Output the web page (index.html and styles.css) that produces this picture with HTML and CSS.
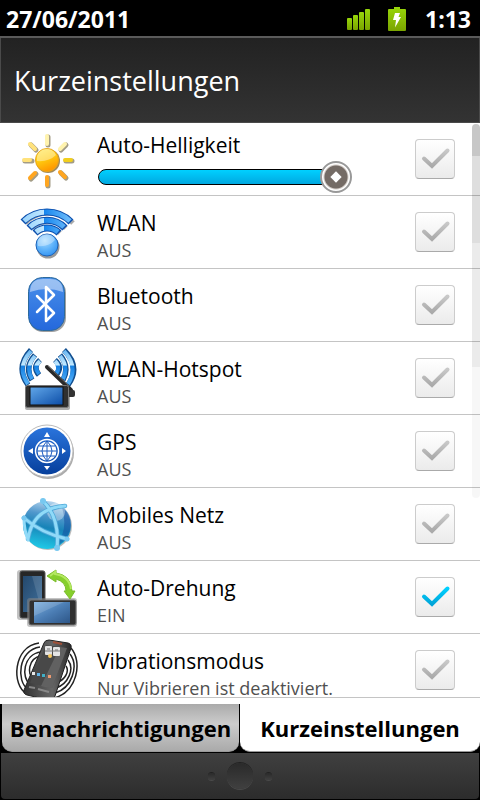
FILE: index.html
```html
<!DOCTYPE html>
<html lang="de">
  <head>
    <meta charset="UTF-8" />
    <meta name="viewport" content="width=device-width, initial-scale=1.0" />
    <title>Kurzeinstellungen</title>
    <link rel="stylesheet" href="styles.css">
  </head>
  <body>
    <!-- shared gradients and the tick -->
    <svg class="defs" width="0" height="0" aria-hidden="true">
      <defs>
        <linearGradient id="tickOff" x1="0" y1="0" x2="0" y2="1">
          <stop offset="0" stop-color="#c8c8c8" />
          <stop offset="1" stop-color="#aaa" />
        </linearGradient>
        <linearGradient id="tickOn" x1="0" y1="0" x2="0" y2="1">
          <stop offset="0" stop-color="#00d0ff" />
          <stop offset="1" stop-color="#00a4d8" />
        </linearGradient>
        <linearGradient id="green" x1="0" y1="0" x2="0" y2="1">
          <stop offset="0" stop-color="#98d60a" />
          <stop offset="1" stop-color="#7aa400" />
        </linearGradient>
        <linearGradient id="sun" x1="0" y1="0" x2="0.4" y2="1">
          <stop offset="0" stop-color="#ffe94a" />
          <stop offset="0.5" stop-color="#ffce10" />
          <stop offset="1" stop-color="#ff9a00" />
        </linearGradient>
        <linearGradient id="wave" x1="0" y1="0" x2="1" y2="0">
          <stop offset="0" stop-color="#9bd4fb" />
          <stop offset="0.43" stop-color="#bfe6ff" />
          <stop offset="0.44" stop-color="#1686ee" />
          <stop offset="1" stop-color="#6dbcfb" />
        </linearGradient>
        <linearGradient id="spot" x1="0" y1="2" x2="0" y2="39" gradientUnits="userSpaceOnUse">
          <stop offset="0" stop-color="#5aaef0" />
          <stop offset="0.45" stop-color="#c2e9ff" />
          <stop offset="0.5" stop-color="#1682e4" />
          <stop offset="1" stop-color="#59b4fa" />
        </linearGradient>
        <radialGradient id="ball" cx="0.4" cy="0.3" r="0.8">
          <stop offset="0" stop-color="#a9dcff" />
          <stop offset="0.5" stop-color="#62b5fb" />
          <stop offset="1" stop-color="#2a8df0" />
        </radialGradient>
        <linearGradient id="blue" x1="0" y1="0" x2="0" y2="1">
          <stop offset="0" stop-color="#4a90ea" />
          <stop offset="1" stop-color="#2468dc" />
        </linearGradient>
        <linearGradient id="navy" x1="0" y1="0" x2="0" y2="1">
          <stop offset="0" stop-color="#2a74dc" />
          <stop offset="1" stop-color="#063f9c" />
        </linearGradient>
        <linearGradient id="screen" x1="0" y1="0" x2="1" y2="1">
          <stop offset="0" stop-color="#62a8ea" />
          <stop offset="1" stop-color="#0b4ca6" />
        </linearGradient>
        <linearGradient id="glass" x1="0" y1="0" x2="1" y2="1">
          <stop offset="0" stop-color="#7aaede" />
          <stop offset="0.5" stop-color="#4b7db4" />
          <stop offset="1" stop-color="#2d5688" />
        </linearGradient>
        <linearGradient id="glassDark" x1="0" y1="0" x2="1" y2="1">
          <stop offset="0" stop-color="#24486c" />
          <stop offset="1" stop-color="#40709c" />
        </linearGradient>
        <linearGradient id="globe" x1="0.6" y1="0" x2="0.4" y2="1">
          <stop offset="0" stop-color="#b8d6ee" />
          <stop offset="0.3" stop-color="#4f97cc" />
          <stop offset="0.55" stop-color="#1784b8" />
          <stop offset="1" stop-color="#20cbe8" />
        </linearGradient>
        <linearGradient id="body" x1="0" y1="0" x2="1" y2="0">
          <stop offset="0" stop-color="#333" />
          <stop offset="0.6" stop-color="#666" />
          <stop offset="1" stop-color="#2a2a2a" />
        </linearGradient>
        <symbol id="tick" viewBox="0 0 40 40">
          <path d="M9 19.500 L17 27 L32.500 11.500" fill="none" stroke-width="4" stroke-linecap="round" />
        </symbol>
      </defs>
    </svg>

    <div class="screen">
      <div class="statusbar">
        <span>27/06/2011</span>
        <svg class="signal" width="28" height="26" viewBox="0 0 28 26" aria-hidden="true">
          <g fill="url(#green)">
            <rect x="2" y="12" width="5" height="12" rx="1" />
            <rect x="8" y="9" width="5" height="15" rx="1" />
            <rect x="14" y="6" width="5" height="18" rx="1" />
            <rect x="20" y="3" width="5" height="21" rx="1" />
          </g>
        </svg>
        <svg class="battery" width="18" height="26" viewBox="0 0 18 26" aria-hidden="true">
          <path d="M1 3 H6 V1 H12 V3 H17 Q18 3 18 4 V24 Q18 25 17 25 H1 Q0 25 0 24 V4 Q0 3 1 3Z" fill="url(#green)" />
          <path d="M7 7 H12 L10.500 11 H13 L7 21.500 L8 14 H5Z" fill="#fff" />
        </svg>
        <span class="clock">1:13</span>
      </div>

      <h1 class="title">Kurzeinstellungen</h1>

      <main class="content">
        <ul class="settings">
          <li class="row">
            <svg class="icon" viewBox="0 0 64 64" aria-hidden="true">
              <g stroke-width="5" stroke-linecap="round">
                <g stroke="#8d8468" opacity=".8">
                  <path d="M33 10V18M33 51V59M10 34H17M51 34H57M16 18L21 23M51 18L46 23M16 52L21 47M51 51L46 46" />
                </g>
                <g stroke-width="4">
                  <path stroke="#fff3ae" d="M32 9V17M50 17L45 22" />
                  <path stroke="#ffe27c" d="M15 17L20 22M9 33H15" />
                  <path stroke="#f2cf1c" d="M50 33H56" />
                  <path stroke="#ffa620" d="M15 51L20 46M32 50V58M50 50L45 45" />
                </g>
              </g>
              <circle cx="33" cy="34" r="12" fill="#a08a5c" />
              <circle cx="32" cy="33" r="11.500" fill="url(#sun)" stroke="#e8a51c" />
              <path d="M22 34 A10 10 0 0 1 41 28 Q34 35 22 34Z" fill="#fff" opacity=".4" />
            </svg>
            <div class="text with-slider">
              <label class="name" for="brightness">Auto-Helligkeit</label>
              <div class="slider">
                <span class="bar"></span>
                <input type="range" min="0" max="100" value="100" aria-label="Helligkeit">
              </div>
            </div>
            <span class="check">
              <input type="checkbox" id="brightness">
              <svg aria-hidden="true"><use href="#tick" /></svg>
            </span>
          </li>

          <li class="row">
            <svg class="icon" viewBox="0 0 64 64" aria-hidden="true">
              <path d="M10 23 A34 34 0 0 1 58 23M17 28 A25 25 0 0 1 51 28M22 33 A17 17 0 0 1 45 33" fill="none" stroke="#555" stroke-width="5" opacity=".5" />
              <circle cx="33" cy="47" r="11.500" fill="#555" opacity=".6" />
              <g fill="none">
                <path stroke="#0c4fae" stroke-width="7" d="M8 22 A34 34 0 0 1 56 22M14 28 A25 25 0 0 1 50 28M20 33 A17 17 0 0 1 44 33" />
                <path stroke="url(#wave)" stroke-width="5" d="M9 21 A34 34 0 0 1 55 21M15 27 A25 25 0 0 1 49 27M21 32 A17 17 0 0 1 43 32" />
              </g>
              <circle cx="32" cy="45" r="11" fill="url(#ball)" stroke="#1c62b8" />
              <path d="M23 46 A9 9 0 0 1 40 40 Q34 47 23 46Z" fill="#fff" opacity=".35" />
            </svg>
            <div class="text">
              <label class="name" for="wlan">WLAN</label>
              <span class="state">AUS</span>
            </div>
            <span class="check">
              <input type="checkbox" id="wlan">
              <svg aria-hidden="true"><use href="#tick" /></svg>
            </span>
          </li>

          <li class="row">
            <svg class="icon" viewBox="0 0 64 64" aria-hidden="true">
              <rect x="14" y="6" width="37" height="53" rx="14" fill="#777" opacity=".7" />
              <rect x="13.500" y="4.500" width="36" height="53" rx="14" fill="url(#blue)" stroke="#2c6a9c" />
              <path d="M15 19 Q15 6 28 6 H35 Q48 6 48 19 Q32 13 15 19Z" fill="#fff" opacity=".45" />
              <path d="M22 23 L39 40 L31 48 V14 L39 22 L22 39" fill="none" stroke="#fff" stroke-width="2.500" stroke-linejoin="round" stroke-linecap="round" />
            </svg>
            <div class="text">
              <label class="name" for="bluetooth">Bluetooth</label>
              <span class="state">AUS</span>
            </div>
            <span class="check">
              <input type="checkbox" id="bluetooth">
              <svg aria-hidden="true"><use href="#tick" /></svg>
            </span>
          </li>

          <li class="row">
            <svg class="icon" viewBox="0 0 64 64" aria-hidden="true">
              <g fill="none">
                <path stroke="#124f90" stroke-width="5.500" d="M16 4 Q0 21 13 39M20 9 Q9 21 17 34M25 14 Q17 21 24 29M49 4 Q66 21 53 39M45 9 Q55 21 48 34M40 14 Q48 21 41 29" />
                <path stroke="url(#spot)" stroke-width="4" d="M16 5 Q1 21 13 38M20 10 Q10 21 17 33M25 15 Q18 21 24 28M49 5 Q64 21 53 38M45 10 Q54 21 48 33M40 15 Q46 21 41 28" />
              </g>
              <rect x="10" y="41" width="45" height="23" rx="2" fill="#777" opacity=".6" />
              <path d="M32 21 L56 44" stroke="#292929" stroke-width="4" stroke-linecap="round" />
              <path d="M33 20 L54 40" stroke="#666" stroke-width="1" />
              <rect x="52" y="44" width="8" height="7" rx="2" fill="#333" />
              <rect x="10.500" y="39.500" width="43" height="22" rx="2" fill="#303030" stroke="#777" />
              <rect x="15" y="41" width="33" height="18" fill="url(#screen)" stroke="#111" />
            </svg>
            <div class="text">
              <label class="name" for="hotspot">WLAN-Hotspot</label>
              <span class="state">AUS</span>
            </div>
            <span class="check">
              <input type="checkbox" id="hotspot">
              <svg aria-hidden="true"><use href="#tick" /></svg>
            </span>
          </li>

          <li class="row">
            <svg class="icon" viewBox="0 0 64 64" aria-hidden="true">
              <circle cx="33" cy="34" r="26" fill="#888" opacity=".7" />
              <circle cx="32" cy="32" r="26" fill="#fff" stroke="#bbb" />
              <circle cx="32" cy="32" r="23.500" fill="url(#navy)" />
              <circle cx="32" cy="32" r="11.500" fill="none" stroke="#fff" stroke-width="1.500" />
              <circle cx="32" cy="32" r="9.500" fill="#fff" />
              <path d="M32 22V42M22 32H42M24 27H40M24 37H40M32 22 Q22 32 32 42 Q42 32 32 22" fill="none" stroke="#1d5cc0" />
              <path d="M32 13L35 18H29ZM32 51L35 47H29ZM13 32L18 29V35ZM51 32L47 29V35Z" fill="#fff" />
            </svg>
            <div class="text">
              <label class="name" for="gps">GPS</label>
              <span class="state">AUS</span>
            </div>
            <span class="check">
              <input type="checkbox" id="gps">
              <svg aria-hidden="true"><use href="#tick" /></svg>
            </span>
          </li>

          <li class="row">
            <svg class="icon" viewBox="0 0 64 64" aria-hidden="true">
              <circle cx="33" cy="34" r="24" fill="#777" opacity=".5" />
              <circle cx="32" cy="33" r="24" fill="url(#globe)" />
              <path d="M47 15 Q58 24 55 38 Q50 52 40 54 Q54 40 47 15Z" fill="#1450a0" opacity=".55" />
              <ellipse cx="41" cy="20" rx="9" ry="9" fill="#fff" opacity=".35" />
              <g fill="none" stroke="#4fa8d8" stroke-width="4.500" stroke-linecap="round">
                <path d="M28 9 Q45 26 42 56M9 26 Q26 41 52 47M13 47 Q18 16 50 14" />
              </g>
              <g fill="none" stroke="#90daf8" stroke-width="3" stroke-linecap="round">
                <path d="M13 47 Q18 16 50 14M9 26 Q9 38 13 48M28 9 Q45 26 42 56M9 26 Q26 41 52 47" />
              </g>
              <g fill="#78c8f0">
                <circle cx="28" cy="9" r="3" />
                <circle cx="9" cy="26" r="2.500" />
                <circle cx="52" cy="47" r="2.500" />
                <circle cx="42" cy="56" r="3" />
              </g>
            </svg>
            <div class="text">
              <label class="name" for="mobile">Mobiles Netz</label>
              <span class="state">AUS</span>
            </div>
            <span class="check">
              <input type="checkbox" id="mobile">
              <svg aria-hidden="true"><use href="#tick" /></svg>
            </span>
          </li>

          <li class="row">
            <svg class="icon" viewBox="0 0 64 64" aria-hidden="true">
              <rect x="2" y="5" width="28" height="50" rx="3" fill="#999" opacity=".6" />
              <rect x="5" y="6" width="25" height="47" rx="2" fill="#262626" stroke="#555" />
              <rect x="8" y="11" width="19" height="36" fill="url(#glassDark)" />
              <path d="M17 11 L27 11 V47Z" fill="#fff" opacity=".12" />
              <rect x="12" y="33" width="50" height="29" rx="3" fill="#888" opacity=".5" />
              <rect x="14" y="35" width="47" height="25" rx="2" fill="#303030" stroke="#777" />
              <rect x="19" y="37" width="36" height="21" fill="url(#glass)" />
              <path d="M19 37 H49 L19 51Z" fill="#fff" opacity=".15" />
              <path d="M32 11 L41 5 V8 Q56 10 57 26 H60 L55 34 L49 26 H51 Q51 17 41 14 V17Z" fill="#86cf2c" stroke="#7cbc2c" />
              <path d="M35 11 L40 7 V9 Q54 11 56 24" fill="none" stroke="#b4e860" stroke-width="2" />
            </svg>
            <div class="text">
              <label class="name" for="rotation">Auto-Drehung</label>
              <span class="state">EIN</span>
            </div>
            <span class="check">
              <input type="checkbox" id="rotation" checked>
              <svg aria-hidden="true"><use href="#tick" /></svg>
            </span>
          </li>

          <li class="row">
            <svg class="icon" viewBox="0 0 64 64" aria-hidden="true">
              <g fill="none" stroke="#222" stroke-width="1.500">
                <path d="M24 5 C-2 8 -4 48 12 56M25 9 C3 12 1 44 13 51M26 14 C8 16 6 40 15 46M26 18 C13 20 12 37 18 40" />
                <path d="M56 10 C68 24 62 54 39 60M55 16 C64 28 57 50 40 55M53 22 C60 31 53 46 41 50M51 28 C55 34 49 42 43 44" />
              </g>
              <path d="M29 5 Q30 2 34 2 L53 5 Q57 6 56 10 L40 58 Q38 63 33 62 L12 57 Q8 56 9 52Z" fill="url(#body)" stroke="#222" />
              <path d="M31 7 L52 10 L37 50 L15 45Z" fill="#484848" />
              <path d="M45 9 L52 10 L37 50 L26 48Z" fill="#888" opacity=".4" />
              <path d="M38 4 L47 6" stroke="#a05038" stroke-width="2" />
              <rect x="30" y="8" width="7" height="9" rx="1" fill="#e4e4e4" />
              <rect x="38" y="9" width="7" height="9" rx="1" fill="#e4e4e4" />
              <path d="M30 13H45M32 11H35M40 12H43" stroke="#777" />
              <circle cx="35" cy="18" r="2" fill="#f6c860" />
              <rect x="17" y="34" width="3" height="3" fill="#e8e8e8" />
              <rect x="22" y="35" width="3" height="3" fill="#62b4e8" />
              <rect x="27" y="36" width="3" height="3" fill="#3faec6" />
              <rect x="33" y="37" width="3" height="3" fill="#ee9a70" />
              <path d="M14 49L20 50M23 51L34 54" stroke="#888" stroke-width="2" />
            </svg>
            <div class="text">
              <label class="name" for="vibration">Vibrationsmodus</label>
              <span class="state">Nur Vibrieren ist deaktiviert.</span>
            </div>
            <span class="check">
              <input type="checkbox" id="vibration">
              <svg aria-hidden="true"><use href="#tick" /></svg>
            </span>
          </li>
        </ul>
        <div class="scrollbar"></div>
      </main>

      <nav class="tabs">
        <button type="button" class="tab">Benachrichtigungen</button>
        <button type="button" class="tab active">Kurzeinstellungen</button>
      </nav>

      <div class="handle">
        <span class="dot"></span>
        <span class="knob"></span>
        <span class="dot"></span>
      </div>
    </div>
  </body>
</html>
```

FILE: styles.css
```css
* {
  box-sizing: border-box;
}
body {
  margin: 0;
  background: #000;
  font-family: "Open Sans", "Noto Sans", sans-serif;
}
.defs {
  position: absolute;
}
.screen {
  display: flex;
  flex-direction: column;
  height: 100vh;
}

/* status bar */
.statusbar {
  display: flex;
  align-items: center;
  height: 38px;
  padding: 2px 9px 0 6px;
  border-bottom: 2px solid #5a5a5a;
  background: #000;
  color: #fff;
  font-size: 23px;
  font-weight: bold;
}
.signal {
  margin-left: auto;
}
.battery {
  margin: 0 19px 0 15px;
}

/* title */
.title {
  margin: 0;
  height: 85px;
  padding: 0 13px;
  border: 1px solid #4a4a4a;
  border-top: none;
  background: linear-gradient(#222, #333);
  color: #fff;
  font-size: 27px;
  font-weight: normal;
  line-height: 86px;
}

/* list */
.content {
  position: relative;
  flex: 1;
  min-height: 0;
  overflow: hidden;
  background: #fff;
  border-bottom: 1px solid #c4c4c4;
}
.settings {
  list-style: none;
  margin: 0;
  padding: 0;
}
.row {
  display: flex;
  align-items: center;
  height: 73px;
  padding: 0 25px 0 15px;
  border-bottom: 1px solid #c4c4c4;
}
.icon {
  flex: none;
  width: 64px;
  height: 64px;
}
.text {
  display: flex;
  flex-direction: column;
  flex: 1;
  min-width: 0;
  padding: 8px 16px 0 18px;
}
.name {
  color: #000;
  font-size: 21px;
  line-height: 28px;
}
.state {
  color: #505050;
  font-size: 18px;
  line-height: 26px;
  white-space: nowrap;
}

/* brightness slider */
.with-slider {
  padding-top: 6px;
}
.slider {
  display: grid;
  align-items: center;
  margin: 2px 47px 0 1px;
}
.slider .bar,
.slider input {
  grid-area: 1 / 1;
}
.slider .bar {
  height: 16px;
  margin-right: 12px;
  border: 1px solid #000;
  border-radius: 8px;
  background: linear-gradient(#00d0ff, #00a8e0);
}
.slider input {
  appearance: none;
  width: 100%;
  height: 32px;
  margin: 0;
  background: none;
}
.slider input::-webkit-slider-thumb {
  appearance: none;
  width: 32px;
  height: 32px;
  border: 2px solid #999;
  border-radius: 50%;
  background: radial-gradient(circle, #746b65 11px, #d2cbc6 12px, #fff 13px);
}
/* diamond on the thumb */
.slider::after {
  content: "";
  grid-area: 1 / 1;
  justify-self: end;
  width: 8px;
  height: 8px;
  margin-right: 12px;
  background: #fff;
  transform: rotate(45deg);
  pointer-events: none;
}

/* tick box */
.check {
  display: grid;
  flex: none;
}
.check input,
.check svg {
  grid-area: 1 / 1;
  width: 40px;
  height: 40px;
}
.check input {
  appearance: none;
  margin: 0;
  border: 1px solid #ccc;
  border-bottom-color: #aaa;
  border-radius: 4px;
  background: linear-gradient(#fff, #ebebeb);
}
.check svg {
  stroke: url(#tickOff);
  pointer-events: none;
}
.check input:checked + svg {
  stroke: url(#tickOn);
}

.scrollbar {
  position: absolute;
  top: 1px;
  right: 0;
  width: 8px;
  height: 374px;
  border-radius: 4px;
  background: linear-gradient(rgba(0, 0, 0, 0.22) 32px, rgba(0, 0, 0, 0.13) 32px 119px, rgba(0, 0, 0, 0.08) 119px 243px, rgba(0, 0, 0, 0.03) 243px);
}

/* tabs */
.tabs {
  display: grid;
  grid-template-columns: 1fr 1fr;
  padding-top: 6px;
  background: linear-gradient(#fff 6px, #000 6px);
}
.tab {
  height: 48px;
  margin: 0 1px 0 2px;
  padding: 0;
  border: none;
  border-bottom: 1px solid #999;
  border-radius: 0 0 10px 10px;
  background: linear-gradient(#aaa, #ccc 20px, #aaa);
  color: #000;
  font: bold 22px "Open Sans", "Noto Sans", sans-serif;
}
.tab.active {
  margin: 0;
  background: #fff;
}

/* drag handle */
.handle {
  display: flex;
  align-items: center;
  justify-content: center;
  gap: 12px;
  height: 46px;
  margin: 1px;
  border-radius: 0 0 4px 4px;
  background: linear-gradient(#404040, #2c2c2c);
}
.knob,
.dot {
  border-radius: 50%;
  background: linear-gradient(#2a2a2a, #404040);
  box-shadow: 0 1px 0 #4a4a4a, 0 -1px 0 #222;
}
.knob {
  width: 26px;
  height: 26px;
}
.dot {
  width: 7px;
  height: 7px;
}
```
